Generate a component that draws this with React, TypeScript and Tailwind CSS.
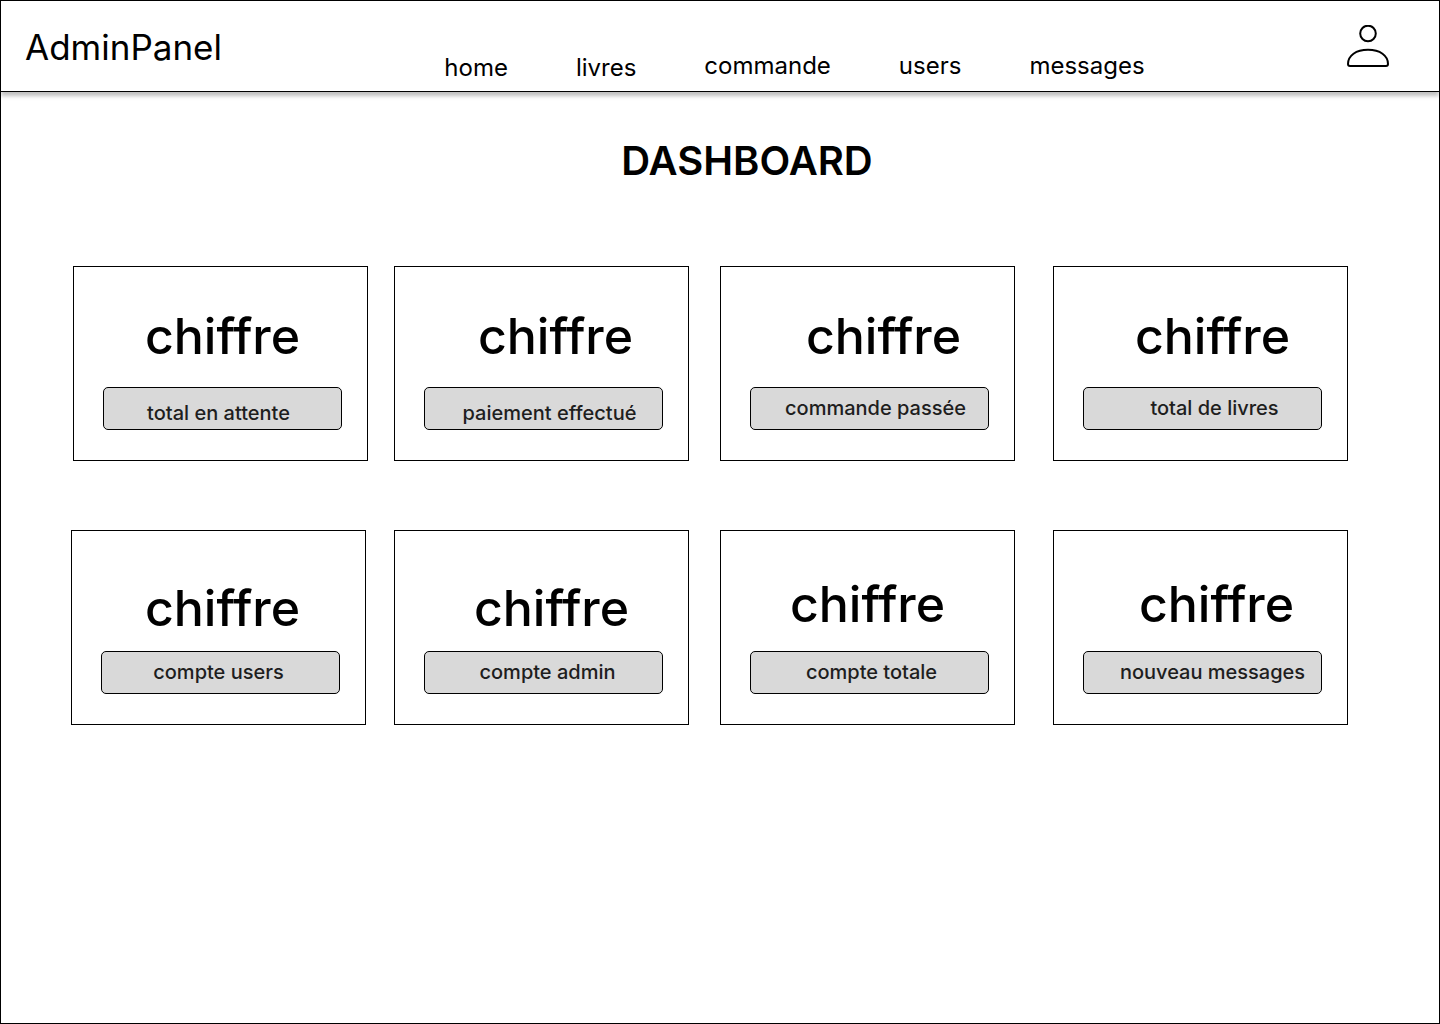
import React from "react";

type Stat = { label: string; figure: string; caption: string };

const firstRow: Stat[] = [
  { label: "total en attente", figure: "pt-8", caption: "pt-2 pr-2" },
  { label: "paiement effectué", figure: "pl-6 pt-8", caption: "pt-2 pl-3" },
  { label: "commande passée", figure: "pl-7 pt-8", caption: "pb-0.5 pl-3" },
  { label: "total de livres", figure: "pl-5 pt-8", caption: "pb-0.5 pl-6" },
];

const secondRow: Stat[] = [
  { label: "compte users", figure: "pl-1 pt-10", caption: "pb-0.5 pr-1" },
  { label: "compte admin", figure: "pl-4 pt-10", caption: "pb-0.5 pl-2" },
  { label: "compte totale", figure: "pr-1 pt-9", caption: "pb-0.5 pl-1" },
  { label: "nouveau messages", figure: "pl-7 pt-9", caption: "pb-0.5 pl-5" },
];

const links = [
  { label: "home", place: "pt-0.5" },
  { label: "livres", place: "pt-0.5" },
  { label: "commande", place: "" },
  { label: "users", place: "" },
  { label: "messages", place: "" },
];

function StatCard({ stat }: { stat: Stat }) {
  return (
    <article className="flex flex-col border border-black pr-[25px] pb-[30px] pl-[29px]">
      <p className={`flex h-[120px] justify-center text-[50px] leading-[74px] font-medium ${stat.figure}`}>chiffre</p>
      <button
        type="button"
        className={`flex h-[43px] items-center justify-center rounded-[5px] border border-black bg-[#d9d9d9] text-[20px] leading-6 font-medium whitespace-nowrap ${stat.caption}`}
      >
        <span className="text-[#1e1e1e]">{stat.label}</span>
      </button>
    </article>
  );
}

export default function App() {
  return (
    <div className="flex min-h-screen flex-col border border-black bg-white font-['Inter',sans-serif] text-black">
      <header className="flex h-[91px] justify-between border-b border-black pr-[50px] pl-6 shadow-[0_4px_4px_rgba(0,0,0,0.25)]">
        <a href="#" className="pt-6 text-[35px] leading-11">AdminPanel</a>
        <nav className="flex gap-[68px] pt-[50px] pl-5 text-[24px] leading-[29px]">
          {links.map((l) => (
            <a key={l.label} href="#" className={l.place}>{l.label}</a>
          ))}
        </nav>
        <button type="button" aria-label="Profil" className="mt-6 h-[42px] w-[42px]">
          <svg viewBox="0 0 42 42" className="h-full w-full" fill="none" stroke="currentColor" strokeWidth="2">
            <circle cx="21" cy="8.5" r="7.8" />
            <path d="M1 39C1 30.5 9 24.8 21 24.8S41 30.5 41 39Q41 41 39 41H3Q1 41 1 39z" />
          </svg>
        </button>
      </header>
      <main className="pr-[91px]">
        <h1 className="pt-[45px] pl-[145px] text-center text-[40px] leading-12 font-semibold">DASHBOARD</h1>
        <section className="mt-[81px] grid grid-cols-[295fr_26fr_295fr_31fr_295fr_38fr_295fr] pl-[72px] [&>*:nth-child(1)]:col-start-1 [&>*:nth-child(2)]:col-start-3 [&>*:nth-child(3)]:col-start-5 [&>*:nth-child(4)]:col-start-7">
          {firstRow.map((s) => <StatCard key={s.label} stat={s} />)}
        </section>
        <section className="mt-[69px] grid grid-cols-[295fr_28fr_295fr_31fr_295fr_38fr_295fr] pl-[70px] [&>*:nth-child(1)]:col-start-1 [&>*:nth-child(2)]:col-start-3 [&>*:nth-child(3)]:col-start-5 [&>*:nth-child(4)]:col-start-7">
          {secondRow.map((s) => <StatCard key={s.label} stat={s} />)}
        </section>
      </main>
    </div>
  );
}
